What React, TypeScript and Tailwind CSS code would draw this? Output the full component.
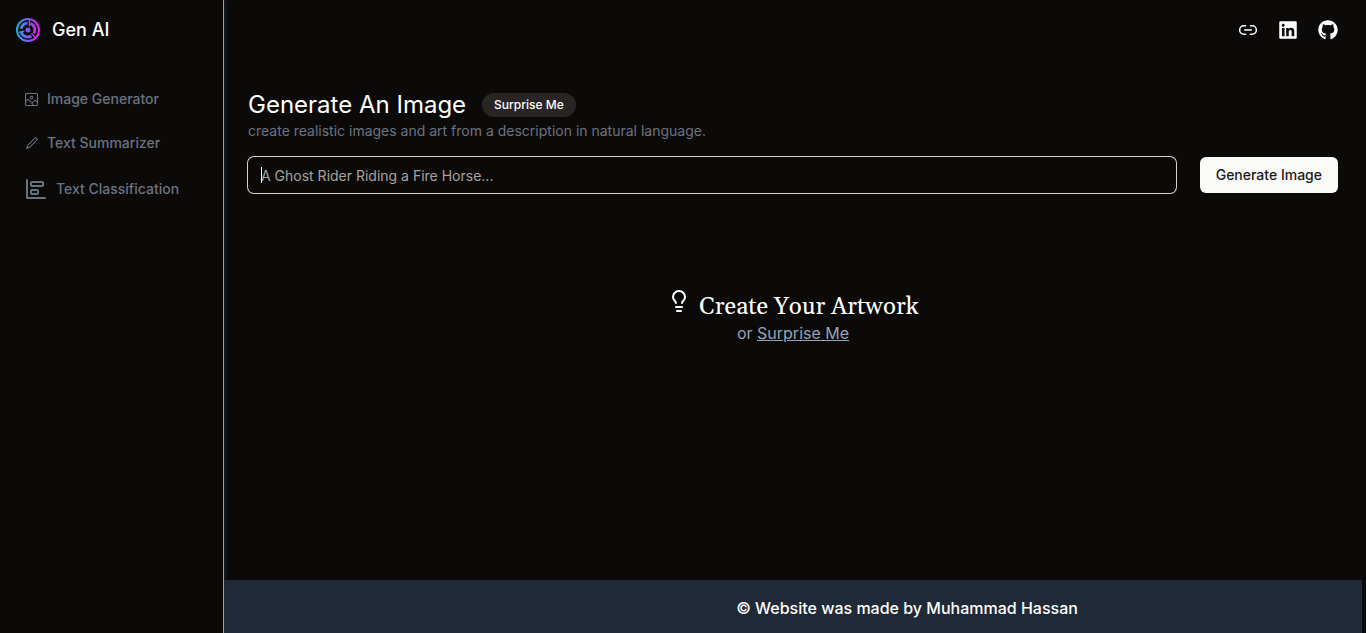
import { Lightbulb, Link2 } from "lucide-react";
import { FaGithub, FaLinkedin } from "react-icons/fa";
import { RxImage, RxPencil1 } from "react-icons/rx";

function Logo() {
  return (
    <svg viewBox="0 0 24 24" className="size-6" fill="none" aria-hidden="true">
      <defs>
        <linearGradient id="logo" gradientUnits="userSpaceOnUse" x1="0" y1="12" x2="24" y2="12">
          <stop offset="0" stopColor="#12b4e4" />
          <stop offset="0.5" stopColor="#7a5cf0" />
          <stop offset="1" stopColor="#f016e8" />
        </linearGradient>
      </defs>
      <g stroke="url(#logo)">
        <circle cx="12" cy="12" r="11" strokeWidth="2" />
        <path d="M11.5 5.2A6.8 6.8 0 0 0 5.3 10.6" strokeWidth="2.8" />
        <path d="M14.4 5.4A6.9 6.9 0 0 1 17.8 15.6" strokeWidth="2.8" />
        <path d="M5.2 14A6.9 6.9 0 0 0 15.4 18" strokeWidth="2.8" />
        <path d="M13.4 2v6.4M3 14.4l5.4-1.4M15.4 15.4l4 4.2" strokeWidth="1.4" />
      </g>
      <circle cx="12" cy="12" r="2.5" fill="url(#logo)" />
    </svg>
  );
}

function ChartIcon() {
  return (
    <svg viewBox="0 0 24 24" className="size-6" fill="none" stroke="currentColor" strokeWidth="2" strokeLinecap="round" strokeLinejoin="round" aria-hidden="true">
      <path d="M3 3v18h18" />
      <rect width="12" height="4" x="7" y="5" rx="1" />
      <rect width="7" height="4" x="7" y="13" rx="1" />
    </svg>
  );
}

export default function App() {
  return (
    <div className="flex min-h-screen bg-[#0c0a09] font-['Inter',sans-serif] text-white">
      <aside className="w-56 shrink-0 border-r border-[#9ca3af] shadow-[1px_0_4px_#1f2937]">
        <a href="#home" className="flex h-15 items-center gap-3 pl-4 text-lg font-medium">
          <Logo />
          Gen AI
        </a>
        <nav className="flex flex-col gap-6 pt-[29px] pl-6 text-sm font-medium text-[#6b7280]">
          <a href="#image" className="flex h-5 items-center gap-2">
            <RxImage size={15} />
            Image Generator
          </a>
          <a href="#summary" className="flex h-5 items-center gap-2">
            <RxPencil1 size={15} />
            Text Summarizer
          </a>
          <a href="#classification" className="flex h-6 items-center gap-2">
            <ChartIcon />
            Text Classification
          </a>
        </nav>
      </aside>

      <div className="flex min-w-0 flex-1 flex-col pr-1">
        <header className="flex h-15 items-center justify-end gap-5 pr-6">
          <a href="#link" aria-label="Link"><Link2 size={20} strokeWidth={1.75} /></a>
          <a href="#linkedin" aria-label="LinkedIn"><FaLinkedin size={20} /></a>
          <a href="#github" aria-label="GitHub"><FaGithub size={20} /></a>
        </header>

        <main className="flex-1 px-6 pt-[29px]">
          <div className="flex items-center gap-4">
            <h1 className="text-2xl leading-8">Generate An Image</h1>
            <button type="button" className="h-6 rounded-full bg-[#292524] px-3 text-xs font-medium">
              Surprise Me
            </button>
          </div>
          <p className="text-sm text-[#6b7280]">
            create realistic images and art from a description in natural language.
          </p>
          <form className="mt-4 flex items-center gap-6" onSubmit={(e) => e.preventDefault()}>
            <div className="relative flex min-w-0 flex-1">
              <input
                type="text"
                aria-label="Image description"
                placeholder="A Ghost Rider Riding a Fire Horse..."
                className="peer h-9 w-full rounded-md border border-transparent bg-transparent px-3 text-sm ring-1 ring-[#d6d3d1] outline-none placeholder:text-[#a8a29e]"
              />
              <span
                aria-hidden="true"
                className="pointer-events-none absolute inset-y-0 left-3 my-auto ml-px h-4 w-px bg-white peer-focus:hidden"
              />
            </div>
            <button type="submit" className="h-9 rounded-md bg-[#fafaf9] px-4 text-sm font-medium text-[#1c1917]">
              Generate Image
            </button>
          </form>

          <section className="flex flex-col items-center pt-24">
            <h2 className="flex h-8 gap-2 font-[Georgia,Gelasio,'Liberation_Serif',serif] text-2xl leading-9">
              <Lightbulb size={24} />
              Create Your Artwork
            </h2>
            <p className="text-base text-[#94a3b8]">
              or{" "}
              <button type="button" className="underline">Surprise Me</button>
            </p>
          </section>
        </main>

        <footer className="bg-[#1f2937] pt-[18px] pb-[15px] pl-57 text-center font-medium leading-5">
          © Website was made by Muhammad Hassan
        </footer>
      </div>
    </div>
  );
}
